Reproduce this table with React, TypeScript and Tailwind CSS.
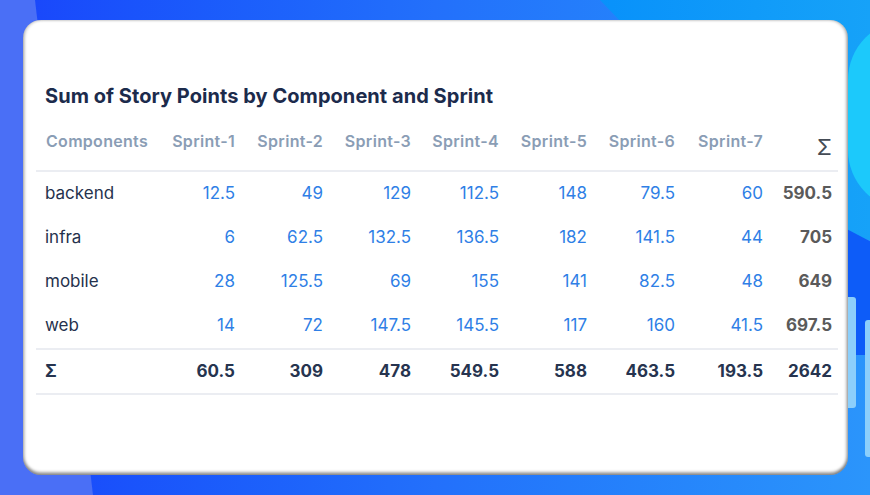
import React from "react"

const sprints = ["Sprint-1", "Sprint-2", "Sprint-3", "Sprint-4", "Sprint-5", "Sprint-6", "Sprint-7"]

const rows = [
  { name: "backend", values: ["12.5", "49", "129", "112.5", "148", "79.5", "60"], total: "590.5" },
  { name: "infra", values: ["6", "62.5", "132.5", "136.5", "182", "141.5", "44"], total: "705" },
  { name: "mobile", values: ["28", "125.5", "69", "155", "141", "82.5", "48"], total: "649" },
  { name: "web", values: ["14", "72", "147.5", "145.5", "117", "160", "41.5"], total: "697.5" },
]

const totals = ["60.5", "309", "478", "549.5", "588", "463.5", "193.5"]

const grid = "grid grid-cols-[119px_repeat(7,88px)_67px]"

export default function App() {
  return (
    <div
      className="relative w-[870px] h-[495px] overflow-hidden bg-gradient-to-r from-[#1a44fb] via-[#2370fb] to-[#2b95fb]"
      style={{ fontFamily: "Inter, 'Noto Sans', sans-serif" }}
    >
      {/* background decoration */}
      <div className="absolute inset-0 bg-[#4a6ff6] [clip-path:polygon(0_0,35px_0,93px_495px,0_495px)]" />
      <div className="absolute inset-0 bg-gradient-to-r from-[#0a68fe] to-[#16a2f8] [clip-path:polygon(600px_0,870px_0,870px_240px,820px_230px)]" />
      <div className="absolute left-[848px] top-[20px] w-[120px] h-[190px] rounded-full bg-[#1cc9fb]" />
      <div className="absolute left-[820px] top-[215px] w-[80px] h-[140px] bg-[#0d5cf8] [clip-path:polygon(0_0,100%_30%,100%_100%,0_100%)]" />
      <div className="absolute left-[840px] top-[297px] w-[16px] h-[111px] rounded-[3px] bg-[#8ccffb]" />
      <div className="absolute left-[865px] top-[320px] w-[10px] h-[137px] rounded-[3px] bg-[#8ccffb]" />

      {/* card */}
      <div className="absolute left-[23px] top-[20px] w-[825px] h-[455px] rounded-[18px] bg-white shadow-[inset_0_-3px_3px_rgba(0,0,0,0.35),inset_2px_0_3px_rgba(0,0,0,0.18),inset_-2px_0_3px_rgba(0,0,0,0.25)]">
        <div className="pt-[62px] pl-[13px]">
          <h2 className="pl-[9px] text-[20px] leading-[28px] font-bold text-[#1c2b4c] tracking-[0.05px]">
            Sum of Story Points by Component and Sprint
          </h2>

          <div className="w-[802px] mt-[15px]">
            <div className={`${grid} h-[47px] border-b-2 border-[#ebedf2] items-end`}>
              <div className="pl-[10px] pb-[19px] text-[16px] leading-[20px] font-semibold tracking-[0.3px] text-[#8a9db5]">Components</div>
              {sprints.map((s) => (
                <div key={s} className="pr-[8px] pb-[19px] text-right text-[16px] leading-[20px] font-semibold tracking-[0.3px] text-[#8a9db5]">
                  {s}
                </div>
              ))}
              <div className="pr-[6px] pb-[11px] text-right text-[22px] leading-[24px] text-[#444b55]">Σ</div>
            </div>

            {rows.map((r) => (
              <div key={r.name} className={`${grid} h-[44px] items-center text-[17px]`}>
                <div className="pl-[9px] text-[#25324d]">{r.name}</div>
                {r.values.map((v, i) => (
                  <div key={i} className="pr-[8px] text-right text-[#2f7fe6]">
                    {v}
                  </div>
                ))}
                <div className="pr-[6px] text-right font-bold text-[#5a5a5a]">{r.total}</div>
              </div>
            ))}

            <div className={`${grid} h-[47px] items-center text-[17px] font-bold text-[#26344f] border-y-2 border-[#ebedf2]`}>
              <div className="pl-[9px]">Σ</div>
              {totals.map((v, i) => (
                <div key={i} className="pr-[8px] text-right">
                  {v}
                </div>
              ))}
              <div className="pr-[6px] text-right">2642</div>
            </div>
          </div>
        </div>
      </div>
    </div>
  )
}
